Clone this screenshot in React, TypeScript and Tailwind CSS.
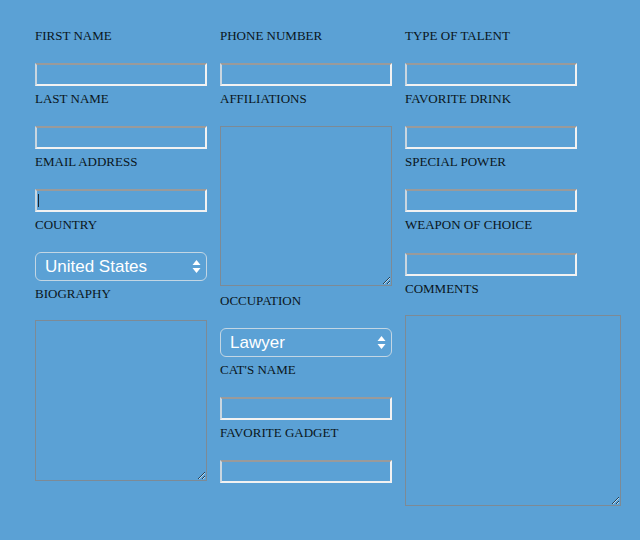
import React from 'react';

const serif = { fontFamily: '"Liberation Serif", "Times New Roman", serif' };

function Label({ children, mb = 'mb-[20px]' }: { children: React.ReactNode; mb?: string }) {
  return (
    <div className={`h-[14px] leading-[14px] text-[13px] text-[#0a1520] uppercase ${mb}`} style={serif}>
      {children}
    </div>
  );
}

function TextInput({ caret }: { caret?: boolean }) {
  return (
    <div className="relative mb-[6px]">
      <input
        type="text"
        className="block w-[172px] h-[23px] bg-transparent border-2 border-t-[#9a9a9a] border-l-[#c9d6e0] border-r-[#f2f2f2] border-b-[#f2f2f2] outline-none"
      />
      {caret && <span className="absolute left-[3px] top-[5px] w-px h-[13px] bg-[#1a2530]" />}
    </div>
  );
}

function Select({ value }: { value: string }) {
  return (
    <div
      className="flex items-center justify-between w-[172px] h-[29px] mb-[6px] pl-[9px] pr-[5px] rounded-md border border-[#c3d6e4] text-white text-[17px]"
      style={{ fontFamily: '"Liberation Sans", Arial, sans-serif' }}
    >
      <span>{value}</span>
      <svg width="9" height="15" viewBox="0 0 9 15" fill="#ffffff">
        <path d="M4.5 1 L8.5 6 L0.5 6 Z" />
        <path d="M4.5 14 L8.5 9 L0.5 9 Z" />
      </svg>
    </div>
  );
}

function Area({ w, h, mb }: { w: string; h: string; mb: string }) {
  return (
    <textarea
      className={`block ${w} ${h} ${mb} bg-transparent border border-[#7d8a95] outline-none resize`}
    />
  );
}

export default function App() {
  return (
    <div className="w-[640px] h-[540px] bg-[#5ba1d5] overflow-hidden">
      <div className="flex pl-[35px] pt-[29px]">
        {/* column 1 */}
        <div className="w-[185px] shrink-0">
          <Label>First Name</Label>
          <TextInput />
          <Label>Last Name</Label>
          <TextInput />
          <Label>Email Address</Label>
          <TextInput caret />
          <Label>Country</Label>
          <Select value="United States" />
          <Label mb="mb-[19px]">Biography</Label>
          <Area w="w-[172px]" h="h-[161px]" mb="mb-0" />
        </div>

        {/* column 2 */}
        <div className="w-[185px] shrink-0">
          <Label>Phone Number</Label>
          <TextInput />
          <Label>Affiliations</Label>
          <Area w="w-[172px]" h="h-[160px]" mb="mb-[8px]" />
          <Label>Occupation</Label>
          <Select value="Lawyer" />
          <Label>Cat's Name</Label>
          <TextInput />
          <Label>Favorite Gadget</Label>
          <TextInput />
        </div>

        {/* column 3 */}
        <div className="w-[220px] shrink-0">
          <Label>Type of Talent</Label>
          <TextInput />
          <Label>Favorite Drink</Label>
          <TextInput />
          <Label>Special Power</Label>
          <TextInput />
          <Label mb="mb-[21px]">Weapon of Choice</Label>
          <TextInput />
          <Label mb="mb-[19px]">Comments</Label>
          <Area w="w-[216px]" h="h-[191px]" mb="mb-0" />
        </div>
      </div>
    </div>
  );
}
